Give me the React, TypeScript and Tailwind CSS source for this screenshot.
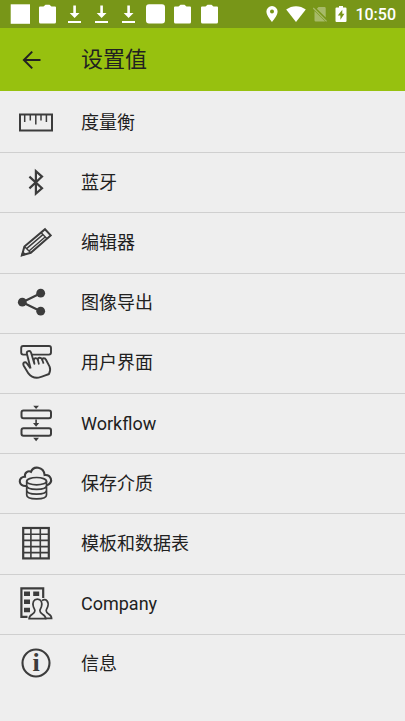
import { ReactNode } from "react";

function Icon({ children }: { children: ReactNode }) {
  return (
    <svg
      viewBox="0 0 40 40"
      className="size-10 shrink-0 text-[#3c3c3c]"
      fill="none"
      stroke="currentColor"
      strokeWidth={2}
      aria-hidden="true"
    >
      {children}
    </svg>
  );
}

const RulerIcon = () => (
  <Icon>
    <rect x="4" y="11.5" width="32" height="16" strokeWidth={2} />
    <path d="M8.7 12v7M14.3 12v5.5M19.8 12v9.5M25 12v5.5M30.4 12v7" strokeWidth={1.5} />
  </Icon>
);

const BluetoothIcon = () => (
  <Icon>
    <path d="M13.4 13.6 26 25.200 19.900 30.600V8.200L26 13.600 13.400 25.400" strokeWidth={2.2} />
  </Icon>
);

const PencilIcon = () => (
  <Icon>
    <path d="M29 6.200 34.700 12.400 14.800 29.800 6 32.200 8.400 23.600Z" strokeWidth={2} />
    <path d="M8.400 23.600 14.800 29.800M25 9.600 31 15.800M10.600 25.600 27.200 11.400M13 28 29.400 13.800" strokeWidth={1.4} />
    <path d="M6.600 28 10.600 31.500 4.600 33.400Z" fill="currentColor" stroke="none" />
  </Icon>
);

const ShareIcon = () => (
  <Icon>
    <path d="M24.7 10.2 6.3 19.2 24.7 28.2" strokeWidth={2.2} />
    <g fill="currentColor" stroke="none">
      <circle cx="24.7" cy="10.2" r="4.4" />
      <circle cx="6.3" cy="19.2" r="4.4" />
      <circle cx="24.7" cy="28.2" r="4.4" />
    </g>
  </Icon>
);

const TouchIcon = () => (
  <Icon>
    <rect x="5.2" y="3" width="29.8" height="8.6" rx="2" strokeWidth={1.9} />
    <path
      d="M14.600 25.500 10.900 10.800C10.200 7.900 14.200 6.900 15.100 9.700L18.400 20.800 17.800 17.600C17.400 14.800 20.800 14.200 21.900 17 21.600 14.200 25.200 13.900 26.200 16.600 26.400 14.600 29.200 14.800 30 16.800L33.600 23.600C34.600 26 34.400 28.200 33 31 30 32 27 34 22.600 34.600 18 35.200 14.600 33.400 12.400 30.400L7.600 22.400C6.400 19.400 9.400 18.200 10.800 20.200L14.600 25.500"
      fill="#eee"
      strokeLinejoin="round"
      strokeWidth={1.9}
    />
    <path d="M21.900 17 23 21.500M26.200 16.600 27.600 20.600" strokeWidth={1.700} />
  </Icon>
);

const WorkflowIcon = () => (
  <Icon>
    <rect x="5.500" y="6.600" width="29.500" height="7.600" rx="2" strokeWidth={2} />
    <rect x="5.500" y="24.200" width="29.500" height="7.600" rx="2" strokeWidth={2} />
    <path d="M20.100 15.600v5" strokeWidth={1.6} />
    <path d="M17.200 1.800h5.800l-2.900 3.200zM17 19h6.200L20.100 22.800zM17.200 33.800h5.800l-2.900 3.400z" fill="currentColor" stroke="none" />
  </Icon>
);

const StorageIcon = () => (
  <Icon>
    <path
      d="M10.400 22C2 22.600 1.600 12.800 9 12.700 8.200 8.400 12.400 6.200 15 7.800 17.200 1.600 27.600 2 28.600 11 34.600 10.400 38.400 17.800 31 21.400"
      strokeWidth={2.1}
    />
    <ellipse cx="20.600" cy="17.200" rx="9.900" ry="3.700" fill="#eee" strokeWidth={1.700} />
    <path
      d="M10.700 17.200V31C10.700 36.100 30.500 36.100 30.500 31V17.200M10.700 21.600C10.700 26.700 30.500 26.700 30.500 21.600M10.700 26.300C10.700 31.400 30.500 31.400 30.500 26.300"
      strokeWidth={1.700}
    />
  </Icon>
);

const TableIcon = () => (
  <Icon>
    <rect x="7.200" y="4" width="25.600" height="30.400" strokeWidth={2.2} />
    <path d="M14.900 4v31M24.300 4v31M7 10.200h26M7 16.400h26M7 22.600h26M7 28.600h26" strokeWidth={1.6} />
  </Icon>
);

const CompanyIcon = () => (
  <Icon>
    <path d="M11.500 32.800H5.400V4.400H27.200V14" strokeWidth={2.2} />
    <path d="M8 7.600h6v4.400H8zM17.200 7.600h6v4.400h-6zM8 15.600h6v4.400H8zM8 23.800h6v4.400H8z" fill="currentColor" stroke="none" />
    <path
      d="M26 16.400C30.400 14.200 33 17.800 31.800 22.400 31.400 24.200 30.200 25.200 30.200 26.800 30.200 30.600 35.600 29.400 35.600 34.400H29"
      strokeWidth={1.7}
    />
    <path
      d="M21.400 15.200C17.400 15.200 16.400 18.400 17.300 22.400 17.700 24.200 18.900 25 18.900 26.800 18.900 30.800 13.300 29.600 13.100 34.600H29.700C29.500 29.600 23.900 30.800 23.900 26.800 23.900 25 25.100 24.200 25.500 22.400 26.400 18.400 25.400 15.200 21.400 15.200Z"
      fill="#eee"
      strokeWidth={1.7}
    />
  </Icon>
);

const InfoIcon = () => (
  <Icon>
    <circle cx="20" cy="19" r="13.500" strokeWidth={2.1} />
    <text
      x="20"
      y="27"
      textAnchor="middle"
      fill="currentColor"
      stroke="none"
      className="font-['Liberation_Serif',serif] text-[26px] font-bold"
    >
      i
    </text>
  </Icon>
);

const items = [
  { label: "度量衡", icon: RulerIcon },
  { label: "蓝牙", icon: BluetoothIcon },
  { label: "编辑器", icon: PencilIcon },
  { label: "图像导出", icon: ShareIcon },
  { label: "用户界面", icon: TouchIcon },
  { label: "Workflow", icon: WorkflowIcon },
  { label: "保存介质", icon: StorageIcon },
  { label: "模板和数据表", icon: TableIcon },
  { label: "Company", icon: CompanyIcon },
  { label: "信息", icon: InfoIcon },
];

const notificationPaths = {
  square: "M.7 .3H20v19.500H.7z",
  clipboard: "M3 2.500h3.500L8.500.8h4l2 1.700H18q1 0 1 1v14.500q0 1.500-1.500 1.500H3.500q-1.500 0-1.500-1.500V3.500q0-1 1-1z",
  download: "M9.300 1.500h2.600v7.500h3.600L10.600 14 5.700 9h3.600zM4 17h13v1.900H4z",
  rounded: "M4 .3h13q3 0 3 3v13q0 3.200-3 3.200H4q-3 0-3-3.200v-13q0-3 3-3z",
};

const notifications: (keyof typeof notificationPaths)[] = [
  "square",
  "clipboard",
  "download",
  "download",
  "download",
  "rounded",
  "clipboard",
  "clipboard",
];

function StatusBar() {
  return (
    <div className="flex h-7 items-center justify-between bg-[#789618] pr-[9px] pl-[10px] text-white">
      <div className="flex gap-[7px]">
        {notifications.map((name, i) => (
          <svg key={i} viewBox="0 0 20 20" className="size-5" fill="currentColor" aria-hidden="true">
            <path d={notificationPaths[name]} />
          </svg>
        ))}
      </div>
      <div className="flex items-center">
        <svg viewBox="0 0 12 16" className="mr-2 h-4 w-3" fill="currentColor" aria-hidden="true">
          <path
            fillRule="evenodd"
            d="M6 0a5.600 5.600 0 0 0-5.600 5.600C.4 9.800 6 16 6 16s5.600-6.200 5.600-10.400A5.600 5.600 0 0 0 6 0zm0 3.600a2 2 0 1 1 0 4 2 2 0 0 1 0-4z"
          />
        </svg>
        <svg viewBox="0 0 20 16" className="mr-[7px] h-4 w-5" fill="currentColor" aria-hidden="true">
          <path d="M10 16 .2 3.600C6 -.9 14 -.9 19.800 3.600z" />
        </svg>
        <svg viewBox="0 0 14 16" className="mr-2 h-4 w-3.5" fill="currentColor" opacity=".35" aria-hidden="true">
          <path d="M5.500 1h6q1.200 0 1.200 1.200v9.300L3.800 2.800zM1.500 5 12 15.300q-.2.200-.7.200H2.700q-1.200 0-1.200-1.200z" />
          <path d="M.2 2 13.600 15.400" stroke="currentColor" strokeWidth={1.3} />
        </svg>
        <svg viewBox="0 0 12 16" className="mr-2 h-4 w-3" fill="currentColor" aria-hidden="true">
          <path
            fillRule="evenodd"
            d="M4 0h4v1.500h2.500q1 0 1 1V15q0 1-1 1h-9q-1 0-1-1V2.500q0-1 1-1H4zM7.300 3.800 2.800 9.600h2.600v4.200l4-6H7.300z"
          />
        </svg>
        <span className="pt-px text-base leading-6 font-medium">10:50</span>
      </div>
    </div>
  );
}

export default function App() {
  return (
    <div className="flex min-h-screen flex-col bg-[#eee] font-[Roboto,'Noto_Sans_CJK_SC',sans-serif] text-[#212121]">
      <StatusBar />
      <header className="flex h-[63px] items-center bg-[#97c10f] pt-px pl-5">
        <button type="button" aria-label="返回" className="mr-[37px] size-6">
          <svg viewBox="0 0 24 24" className="size-6" fill="none" stroke="currentColor" strokeWidth={2} aria-hidden="true">
            <path d="M20.500 12H4M12.200 3.600 3.900 12l8.300 8.400" />
          </svg>
        </button>
        <h1 className="text-[22px] leading-8">设置值</h1>
      </header>
      <ul className="grid flex-1 auto-rows-fr pt-px pb-[27px]">
        {items.map(({ label, icon: ItemIcon }) => (
          <li key={label} className="border-t border-[#cfcfcf] first:border-transparent">
            <button type="button" className="flex h-full w-full items-center gap-[25px] px-4 text-left">
              <ItemIcon />
              <span className="text-lg leading-6">{label}</span>
            </button>
          </li>
        ))}
      </ul>
    </div>
  );
}
